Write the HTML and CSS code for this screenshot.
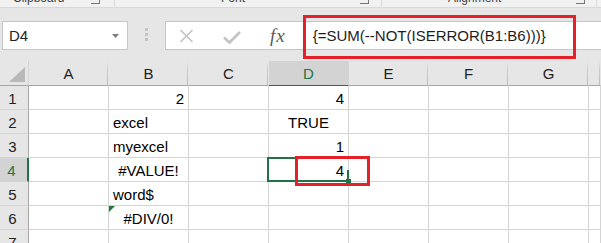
FILE: index.html
```html
<!DOCTYPE html>
<html lang="en">
<head>
  <meta charset="UTF-8" />
  <meta name="viewport" content="width=device-width, initial-scale=1.0" />
  <title>Book1 - Excel</title>
  <link rel="stylesheet" href="styles.css">
</head>
<body>
  <div class="ribbon">
    <div class="group group-clip"><span class="label">Clipboard</span><span class="launcher"></span></div>
    <div class="group group-font"><span class="label">Font</span><span class="launcher"></span></div>
    <div class="group group-align"><span class="label">Alignment</span><span class="launcher"></span></div>
  </div>

  <div class="toolbar">
    <div class="namebox">
      <span>D4</span>
      <svg class="caret" width="7" height="4" viewBox="0 0 7 4"><path d="M0 0h7L3.5 4z" fill="#7a7a7a"/></svg>
    </div>
    <div class="grip"><i></i><i></i><i></i></div>
    <div class="fxbar">
      <svg class="btn-cancel" width="15" height="14" viewBox="0 0 15 14">
        <path d="M1.5 1l12 12M13.5 1l-12 12" stroke="#c4c4c4" stroke-width="1.7" fill="none"/>
      </svg>
      <svg class="btn-enter" width="18" height="13" viewBox="0 0 18 13">
        <path d="M1 6.5l5.5 5L17 1" stroke="#c4c4c4" stroke-width="2.8" fill="none"/>
      </svg>
      <span class="fx">fx</span>
      <div class="formula">{=SUM(--NOT(ISERROR(B1:B6)))}</div>
    </div>
  </div>

  <div class="sheet">
    <div class="hd corner"></div>
    <div class="hd col">A</div>
    <div class="hd col">B</div>
    <div class="hd col">C</div>
    <div class="hd col sel">D</div>
    <div class="hd col">E</div>
    <div class="hd col">F</div>
    <div class="hd col">G</div>
    <div class="hd col"></div>

    <div class="hd row">1</div>
    <div class="cell"></div>
    <div class="cell num">2</div>
    <div class="cell"></div>
    <div class="cell num">4</div>
    <div class="cell"></div><div class="cell"></div><div class="cell"></div><div class="cell"></div>

    <div class="hd row">2</div>
    <div class="cell"></div>
    <div class="cell">excel</div>
    <div class="cell"></div>
    <div class="cell center">TRUE</div>
    <div class="cell"></div><div class="cell"></div><div class="cell"></div><div class="cell"></div>

    <div class="hd row">3</div>
    <div class="cell"></div>
    <div class="cell">myexcel</div>
    <div class="cell"></div>
    <div class="cell num">1</div>
    <div class="cell"></div><div class="cell"></div><div class="cell"></div><div class="cell"></div>

    <div class="hd row sel">4</div>
    <div class="cell"></div>
    <div class="cell center">#VALUE!</div>
    <div class="cell"></div>
    <div class="cell num active">4<span class="edge"></span><span class="handle"></span></div>
    <div class="cell"></div><div class="cell"></div><div class="cell"></div><div class="cell"></div>

    <div class="hd row">5</div>
    <div class="cell"></div>
    <div class="cell">word$</div>
    <div class="cell"></div>
    <div class="cell"></div>
    <div class="cell"></div><div class="cell"></div><div class="cell"></div><div class="cell"></div>

    <div class="hd row">6</div>
    <div class="cell"></div>
    <div class="cell center flagged">#DIV/0!</div>
    <div class="cell"></div>
    <div class="cell"></div>
    <div class="cell"></div><div class="cell"></div><div class="cell"></div><div class="cell"></div>

    <div class="hd row">7</div>
    <div class="cell"></div><div class="cell"></div><div class="cell"></div><div class="cell"></div>
    <div class="cell"></div><div class="cell"></div><div class="cell"></div><div class="cell"></div>
  </div>

  <!-- red annotation boxes drawn over the screenshot -->
  <div class="mark mark-formula"></div>
  <div class="mark mark-cell"></div>
</body>
</html>
```

FILE: styles.css
```css
body {
  margin: 0;
  width: 601px;
  height: 243px;
  overflow: hidden;
  position: relative;
  background: #e6e6e6;
  font-family: 'Liberation Sans', Arial, sans-serif;
  font-size: 15px;
  color: #000;
}

/* ribbon group labels, mostly scrolled out of view */
.ribbon {
  display: flex;
  height: 7px;
  overflow: hidden;
  background: #f1f1f1;
  border-bottom: 1px solid #d8d8d8;
}

.group {
  display: flex;
  align-items: flex-start;
  box-sizing: border-box;
  border-right: 1px solid #dadada;
}

.group .label {
  font-size: 12px;
  line-height: 12px;
  margin-top: -8px;
  color: #444;
}

.group .launcher {
  width: 8px;
  height: 8px;
  margin-top: -5px;
  border-right: 1px solid #777;
  border-bottom: 1px solid #777;
}

.group-clip { width: 115px; padding-left: 13px; }
.group-clip .launcher { margin-left: 27px; }
.group-font { width: 267px; padding-left: 106px; }
.group-font .launcher { margin-left: 115px; }
.group-align { width: 215px; padding-left: 66px; }
.group-align .launcher { margin-left: 75px; }

/* name box + formula bar */
.toolbar {
  display: flex;
  align-items: flex-start;
  height: 53px;
  box-sizing: border-box;
  padding: 13px 0 0 2px;
}

.namebox {
  display: flex;
  align-items: center;
  width: 126px;
  height: 29px;
  box-sizing: border-box;
  border: 1px solid #c6c6c6;
  background: #fff;
  padding-left: 6px;
  line-height: 27px;
  color: #222;
}

.namebox .caret {
  margin-left: auto;
  margin-right: 8px;
}

.grip {
  width: 37px;
  display: flex;
  flex-direction: column;
  align-items: center;
  gap: 2px;
  padding-top: 7px;
}

.grip i {
  width: 3px;
  height: 3px;
  background: #c4c4c4;
}

.fxbar {
  flex: 1;
  display: flex;
  align-items: center;
  height: 29px;
  margin-right: -4px;
  box-sizing: border-box;
  border: 1px solid #c6c6c6;
  background: #fff;
}

.btn-cancel { margin-left: 13px; }
.btn-enter { margin-left: 29px; margin-top: 3px; }

.fx {
  margin-left: 29px;
  font-family: 'Liberation Serif', 'Times New Roman', serif;
  font-style: italic;
  font-size: 19px;
  letter-spacing: 1px;
  color: #5a5a5a;
}

.formula {
  margin-left: 27px;
  line-height: 27px;
  color: #1e1e1e;
  white-space: nowrap;
}

/* the worksheet grid */
.sheet {
  display: grid;
  grid-template-columns: 29px repeat(7, 80px) 1fr;
  grid-template-rows: 25px;
  grid-auto-rows: 24px;
}

.sheet > div {
  box-sizing: border-box;
  border-right: 1px solid #d4d4d4;
  border-bottom: 1px solid #d4d4d4;
  white-space: nowrap;
}

.hd {
  background: #e6e6e6;
  color: #222;
  text-align: center;
}

.hd.col {
  line-height: 24px;
  padding-top: 1px;
  border-bottom-color: #a6a6a6;
  border-right-color: transparent;
  background-image: linear-gradient(#e6e6e6 0, #e6e6e6 1px, #d0d0d0 6px, #bdbdbd 100%);
  background-size: 1px 100%;
  background-position: right top;
  background-repeat: no-repeat;
}

.hd.corner {
  position: relative;
  border-bottom-color: #a6a6a6;
  border-right-color: #d4d4d4;
}

.hd.corner::after {
  content: '';
  position: absolute;
  right: 3px;
  bottom: 3px;
  border-style: solid;
  border-width: 0 0 15px 16px;
  border-color: transparent transparent #b9b9b9 transparent;
}

.hd.row {
  line-height: 21px;
  padding: 2px 3px 0 0;
  border-right-color: #a6a6a6;
}

.hd.col.sel {
  background: #d3d3d3;
  color: #217346;
  border-bottom: 2px solid #217346;
  margin-bottom: -1px;
}

.hd.row.sel {
  background: #d3d3d3;
  color: #217346;
  border-right: 2px solid #217346;
  padding-right: 4px;
}

.cell {
  background: #fff;
  line-height: 21px;
  padding: 2px 4px 0 4px;
}

.cell.num { text-align: right; }
.cell.center { text-align: center; }

.cell.flagged { position: relative; }
.cell.flagged::before {
  content: '';
  position: absolute;
  left: 0;
  top: 0;
  border-style: solid;
  border-width: 6px 6px 0 0;
  border-color: #1e7a3c transparent transparent transparent;
}

.cell.active { position: relative; }
.cell.active::after {
  content: '';
  position: absolute;
  left: -2px;
  top: -1px;
  right: -1px;
  bottom: -1px;
  border: 2px solid #217346;
  border-right-color: transparent;
}

.cell.active .edge {
  position: absolute;
  right: -1px;
  bottom: 2px;
  width: 2px;
  height: 9px;
  background: #217346;
}

.cell.active .handle {
  position: absolute;
  right: -3px;
  bottom: -3px;
  width: 5px;
  height: 5px;
  background: #217346;
}

.mark {
  position: absolute;
  box-sizing: border-box;
  border: 3px solid #e42129;
}

.mark-formula {
  left: 303px;
  top: 15px;
  width: 273px;
  height: 44px;
}

.mark-cell {
  left: 295px;
  top: 156px;
  width: 75px;
  height: 30px;
}
```
